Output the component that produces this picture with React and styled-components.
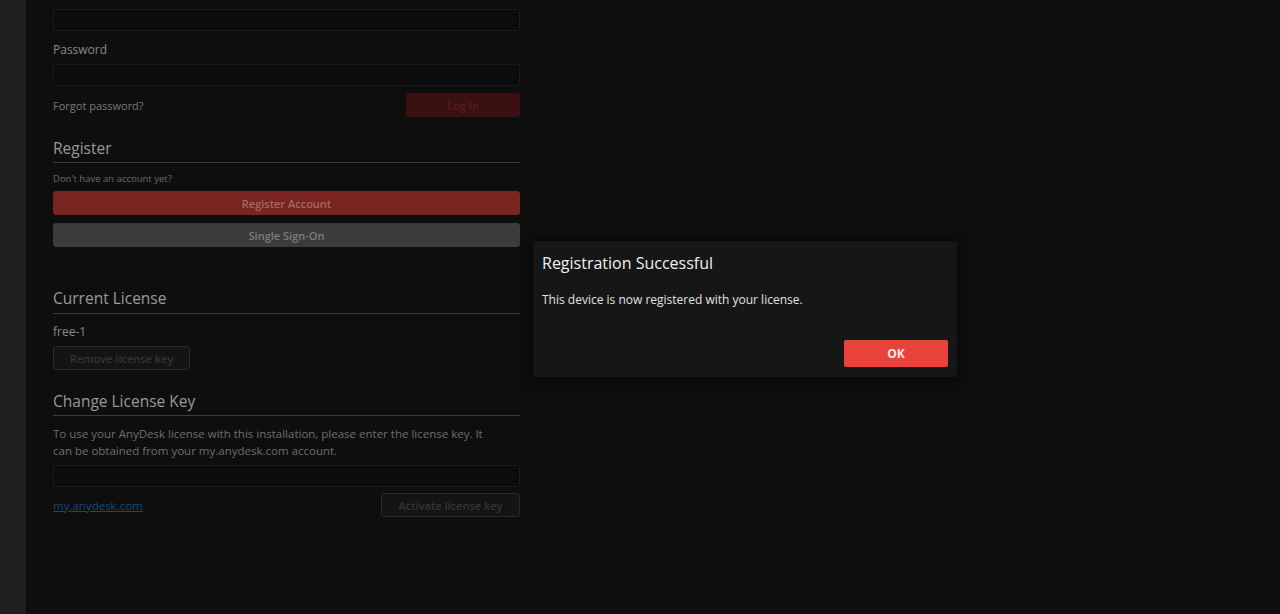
import React from 'react';
import styled, { createGlobalStyle } from 'styled-components';

const GlobalStyle = createGlobalStyle`
  html, body {
    margin: 0;
    padding: 0;
    background: #0e0e0e;
    font-family: "Open Sans", "Noto Sans", sans-serif;
  }
`;

const Page = styled.div`
  position: relative;
  display: flex;
  width: 1280px;
  height: 614px;
  overflow: hidden;
  background: #0e0e0e;
`;

const Sidebar = styled.div`
  width: 26px;
  flex-shrink: 0;
  background: #1f1f1f;
  box-shadow: 1px 0 2px rgba(0, 0, 0, 0.4);
`;

const Content = styled.div`
  width: 467px;
  padding: 9px 0 0 27px;
  display: flex;
  flex-direction: column;
`;

const Input = styled.div`
  height: 20px;
  background: #0c0c0c;
  border: 1px solid #1b1b1b;
  border-radius: 2px;
  margin-top: ${p => p.$mt || 0}px;
`;

const Label = styled.div`
  font-size: 12px;
  color: #8a8a8a;
  margin-top: ${p => p.$mt || 0}px;
  line-height: 16px;
`;

const Row = styled.div`
  display: flex;
  justify-content: space-between;
  align-items: center;
  margin-top: ${p => p.$mt || 0}px;
`;

const SmallText = styled.div`
  font-size: ${p => p.$size || 11}px;
  color: ${p => p.$color || '#7a7a7a'};
  margin-top: ${p => p.$mt || 0}px;
`;

const Button = styled.div`
  height: ${p => p.$h || 24}px;
  width: ${p => (p.$w ? `${p.$w}px` : 'auto')};
  box-sizing: border-box;
  display: flex;
  align-items: center;
  justify-content: center;
  border-radius: 3px;
  font-size: 11px;
  font-weight: 600;
  background: ${p => p.$bg};
  color: ${p => p.$fg};
  border: 1px solid ${p => p.$border || p.$bg};
  margin-top: ${p => p.$mt || 0}px;
`;

const Heading = styled.div`
  font-size: 15.5px;
  color: #9a9a9a;
  line-height: 22px;
  padding-bottom: ${p => p.$pb || 3}px;
  border-bottom: 1px solid #3a3a3a;
  margin-top: ${p => p.$mt || 0}px;
`;

const Paragraph = styled.p`
  margin: 9px 0 0;
  padding-right: 24px;
  font-size: 11.5px;
  line-height: 17px;
  color: #6e6e6e;
`;

const Link = styled.a`
  font-size: 11.5px;
  color: #1b4775;
  text-decoration: underline;
`;

const Dialog = styled.div`
  position: absolute;
  left: 533px;
  top: 241px;
  width: 424px;
  height: 136px;
  box-sizing: border-box;
  background: #161616;
  box-shadow: 0 0 10px rgba(0, 0, 0, 0.7);
  padding: 11px 9px 10px 9px;
  display: flex;
  flex-direction: column;
`;

const DialogTitle = styled.div`
  font-size: 16px;
  color: #f0f0f0;
  line-height: 22px;
`;

const DialogText = styled.div`
  font-size: 12px;
  color: #e2e2e2;
  margin-top: 17px;
`;

const DialogFooter = styled.div`
  margin-top: auto;
  display: flex;
  justify-content: flex-end;
`;

const OkButton = styled.button`
  width: 104px;
  height: 27px;
  border: none;
  border-radius: 2px;
  background: #e8433a;
  color: #fbe9e8;
  font-family: inherit;
  font-size: 12px;
  font-weight: 700;
`;

export default function App() {
  return (
    <Page>
      <GlobalStyle />
      <Sidebar />
      <Content>
        <Input />
        <Label $mt={11}>Password</Label>
        <Input $mt={6} />
        <Row $mt={7}>
          <SmallText $size={11}>Forgot password?</SmallText>
          <Button $w={114} $h={24} $bg="#3a1010" $fg="#5a1e1e">Log In</Button>
        </Row>
        <Heading $mt={20}>Register</Heading>
        <SmallText $size={9.5} $color="#6a6a6a" $mt={9}>Don't have an account yet?</SmallText>
        <Button $mt={6} $bg="#7a2420" $fg="#a36a66">Register Account</Button>
        <Button $mt={8} $bg="#3b3b3b" $fg="#7d7d7d">Single Sign-On</Button>
        <Heading $mt={40} $pb={4}>Current License</Heading>
        <Label $mt={10}>free-1</Label>
        <Button $mt={6} $w={137} $bg="#141414" $border="#2a2a2a" $fg="#353535">Remove license key</Button>
        <Heading $mt={20}>Change License Key</Heading>
        <Paragraph>
          To use your AnyDesk license with this installation, please enter the license key. It can be obtained from your my.anydesk.com account.
        </Paragraph>
        <Input $mt={6} />
        <Row $mt={6}>
          <Link>my.anydesk.com</Link>
          <Button $w={139} $bg="#141414" $border="#2a2a2a" $fg="#353535">Activate license key</Button>
        </Row>
      </Content>
      <Dialog>
        <DialogTitle>Registration Successful</DialogTitle>
        <DialogText>This device is now registered with your license.</DialogText>
        <DialogFooter>
          <OkButton>OK</OkButton>
        </DialogFooter>
      </Dialog>
    </Page>
  );
}
